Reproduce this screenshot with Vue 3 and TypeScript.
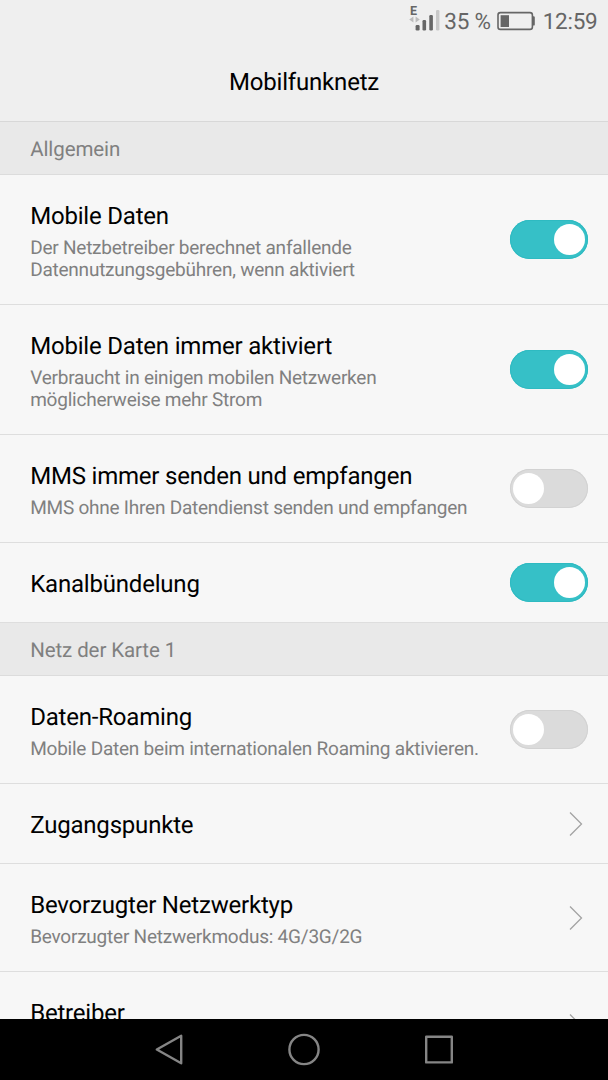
<script setup lang="ts">
interface Item {
  kind: 'section' | 'toggle' | 'link'
  title: string
  summary?: string[]
  on?: boolean
  tall?: boolean
}

const items: Item[] = [
  { kind: 'section', title: 'Allgemein' },
  {
    kind: 'toggle',
    title: 'Mobile Daten',
    summary: ['Der Netzbetreiber berechnet anfallende', 'Datennutzungsgebühren, wenn aktiviert'],
    on: true,
  },
  {
    kind: 'toggle',
    title: 'Mobile Daten immer aktiviert',
    summary: ['Verbraucht in einigen mobilen Netzwerken', 'möglicherweise mehr Strom'],
    on: true,
  },
  {
    kind: 'toggle',
    title: 'MMS immer senden und empfangen',
    summary: ['MMS ohne Ihren Datendienst senden und empfangen'],
    on: false,
  },
  { kind: 'toggle', title: 'Kanalbündelung', on: true },
  { kind: 'section', title: 'Netz der Karte 1' },
  {
    kind: 'toggle',
    title: 'Daten-Roaming',
    summary: ['Mobile Daten beim internationalen Roaming aktivieren.'],
    on: false,
  },
  { kind: 'link', title: 'Zugangspunkte' },
  { kind: 'link', title: 'Bevorzugter Netzwerktyp', summary: ['Bevorzugter Netzwerkmodus: 4G/3G/2G'] },
  { kind: 'link', title: 'Betreiber', tall: true },
]
</script>

<template>
  <div class="screen">
    <header class="top">
      <div class="status">
        <svg class="signal" width="32" height="28" viewBox="0 0 32 28">
          <text x="1" y="11" class="net">E</text>
          <path d="M4.4 12.5v6L.2 15.5zM6.6 12.5v6l4.2-3z" fill="#bcbcbc" />
          <rect x="6.6" y="21" width="4" height="5.5" rx="1.2" fill="#666" />
          <rect x="13.5" y="16" width="3.6" height="10.5" rx="1.2" fill="#666" />
          <rect x="20.3" y="11" width="3.6" height="15.5" rx="1.2" fill="#666" />
          <rect x="27" y="6" width="3.4" height="20.5" rx="1.2" fill="#c8c8c8" />
        </svg>
        <span class="percent">35 %</span>
        <svg class="battery" width="38" height="20" viewBox="0 0 38 20">
          <rect x="1" y="1.6" width="34.4" height="16.8" rx="2.4" fill="none" stroke="#666" stroke-width="1.6" />
          <rect x="3.6" y="4.2" width="8.4" height="11.8" fill="#666" />
          <path d="M36 5.2h.6q1.2 0 1.2 1.2v7q0 1.2-1.2 1.2H36z" fill="#666" />
        </svg>
        <span class="time">12:59</span>
      </div>
      <h1>Mobilfunknetz</h1>
    </header>

    <main class="list">
      <template v-for="item in items" :key="item.title">
        <h2 v-if="item.kind === 'section'" class="section">{{ item.title }}</h2>
        <div v-else class="row" :class="{ single: !item.summary && !item.tall, tall: item.tall }">
          <div class="texts">
            <div class="title">{{ item.title }}</div>
            <div v-for="line in item.summary" :key="line" class="summary">{{ line }}</div>
          </div>
          <span v-if="item.kind === 'toggle'" class="switch" :class="{ on: item.on }"><i class="knob"></i></span>
          <svg v-else class="chevron" width="14" height="26" viewBox="0 0 14 26">
            <path d="M1 1.5 12.5 13 1 24.5" fill="none" stroke="#a3a3a3" stroke-width="1.3" />
          </svg>
        </div>
      </template>
    </main>

    <nav class="nav">
      <svg width="608" height="61" viewBox="0 0 608 61" fill="none" stroke="#858585" stroke-width="2.4" stroke-linejoin="round">
        <path d="M156.8 30.5 181.2 16.8V44.2z" />
        <circle cx="304" cy="30.5" r="14.6" />
        <rect x="426.2" y="17.8" width="25.6" height="25.6" />
      </svg>
    </nav>
  </div>
</template>

<style>
body {
  margin: 0;
  overflow: hidden;
}
</style>

<style scoped>
.screen {
  display: flex;
  flex-direction: column;
  width: 608px;
  height: 1080px;
  overflow: hidden;
  background: #f7f7f7;
  color: #000;
  font-family: Roboto, 'Liberation Sans', sans-serif;
  text-rendering: geometricPrecision;
}
.top {
  flex: none;
  box-sizing: border-box;
  height: 122px;
  background: #efefef;
  border-bottom: 1px solid #d8d8d8;
}
.status {
  display: flex;
  align-items: flex-start;
  justify-content: flex-end;
  height: 42px;
  padding-right: 10.5px;
  color: #666;
  font-size: 22.5px;
  letter-spacing: -0.25px;
  line-height: 44px;
}
.signal {
  margin: 4px 3.5px 0 0;
}
.net {
  font: 700 12.5px Roboto, sans-serif;
  letter-spacing: 0;
  fill: #666;
}
.battery {
  margin: 11px 7.5px 0 6.5px;
}
h1 {
  margin: 0;
  font-size: 24px;
  font-weight: 400;
  letter-spacing: -0.18px;
  line-height: 80px;
  text-align: center;
}
.list {
  flex: 1;
  min-height: 0;
  overflow: hidden;
}
.section {
  box-sizing: border-box;
  height: 53px;
  margin: 0;
  padding-left: 30.2px;
  background: #e9e9e9;
  border-bottom: 1px solid #dcdcdc;
  color: #808080;
  font-size: 20.5px;
  font-weight: 400;
  letter-spacing: -0.1px;
  line-height: 56px;
}
.row {
  display: flex;
  justify-content: space-between;
  align-items: center;
  padding: 0 20px 0 30.2px;
  border-bottom: 1px solid #dedede;
}
.texts {
  padding: 27px 0 23px;
}
.single .texts {
  padding: 27px 0 24px;
}
.tall .texts {
  padding: 27px 0 52px;
}
.title {
  font-size: 24px;
  letter-spacing: -0.2px;
  line-height: 28px;
  white-space: nowrap;
}
.summary {
  color: #808080;
  font-size: 19px;
  letter-spacing: -0.23px;
  line-height: 22px;
  white-space: nowrap;
}
.summary:nth-child(2) {
  margin-top: 7px;
}
.switch {
  box-sizing: border-box;
  flex: none;
  display: flex;
  align-items: center;
  width: 78px;
  height: 39px;
  padding: 0 3.4px;
  border-radius: 20px;
  background: #dbdbdb;
  box-shadow: inset 0 0 0 1px #d2d2d2;
}
.switch.on {
  justify-content: flex-end;
  background: #36c0c7;
  box-shadow: inset 0 0 0 1px #2ebac1;
}
.knob {
  width: 31px;
  height: 31px;
  border-radius: 50%;
  background: #fff;
}
.chevron {
  margin-right: 5px;
}
.nav {
  flex: none;
  height: 61px;
  background: #000;
}
.nav svg {
  display: block;
}
</style>
